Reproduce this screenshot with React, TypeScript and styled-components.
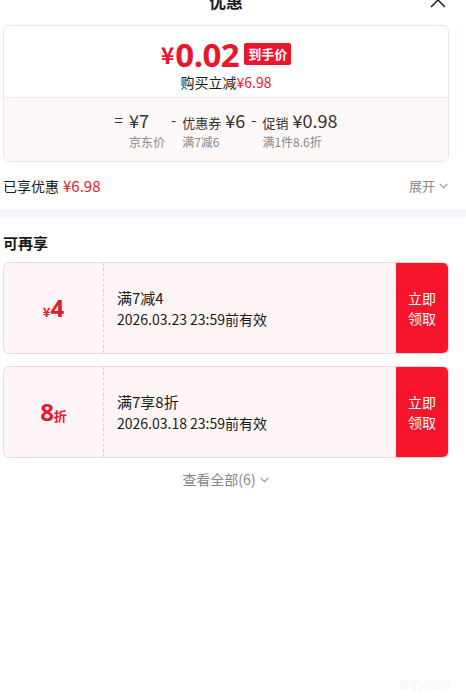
import React from "react";
import styled, { createGlobalStyle } from "styled-components";

const RED = "#e8172c";
const FONT = `"Noto Sans CJK SC", "Noto Sans", sans-serif`;

const GlobalStyle = createGlobalStyle`
  html, body {
    margin: 0;
    padding: 0;
    background: #fff;
    font-family: ${FONT};
    color: #1a1a1a;
  }
`;

const Page = styled.div`
  width: 466px;
  height: 699px;
  overflow: hidden;
  position: relative;
`;

const Header = styled.div`
  display: grid;
  grid-template-columns: 1fr auto 1fr;
  align-items: center;
  height: 40px;
  margin-top: -20px;
  padding: 0 17px 0 3px;
`;

const Title = styled.div`
  grid-column: 2;
  font-size: 17px;
  font-weight: 700;
  color: #1a1a1a;
  line-height: 1;
`;

const Close = styled.div`
  justify-self: end;
  display: flex;
  margin-right: 2px;
`;

const Section = styled.div`
  padding: 0 17px 0 3px;
`;

const SummaryCard = styled.div`
  margin-top: 5px;
  border: 1px solid #f6dfe2;
  border-radius: 6px;
  overflow: hidden;
`;

const SummaryTop = styled.div`
  height: 71px;
  display: flex;
  flex-direction: column;
  align-items: center;
  padding-top: 9px;
  box-sizing: border-box;
`;

const PriceRow = styled.div`
  display: flex;
  align-items: center;
  height: 38px;
  color: ${RED};
  font-weight: 700;
`;

const Yen = styled.span<{ size: number }>`
  font-size: ${(p) => p.size}px;
  font-weight: 700;
  line-height: 1;
  margin-right: 1px;
`;

const BigNum = styled.span`
  font-family: "Noto Sans", sans-serif;
  font-size: 33px;
  line-height: 1;
  letter-spacing: -0.5px;
`;

const Badge = styled.span`
  margin-left: 5px;
  background: ${RED};
  color: #fff;
  font-size: 13px;
  font-weight: 700;
  padding: 0 4px;
  height: 22px;
  line-height: 22px;
  border-radius: 2px;
`;

const SaveLine = styled.div`
  font-size: 14px;
  line-height: 18px;
  color: #1a1a1a;
`;

const Red = styled.span`
  color: ${RED};
`;

const SummaryBottom = styled.div`
  height: 64px;
  background: #fff8f8;
  border-top: 1px solid #fbe9ea;
  display: flex;
  justify-content: center;
  align-items: flex-start;
  padding-top: 11px;
  box-sizing: border-box;
  gap: 6px;
`;

const Op = styled.span`
  font-size: 15px;
  color: #333;
  height: 22px;
  line-height: 22px;
`;

const Term = styled.div`
  display: flex;
  flex-direction: column;
  gap: 2px;
`;

const TermTop = styled.div`
  display: flex;
  align-items: baseline;
  gap: 4px;
  height: 22px;
  line-height: 22px;
  color: #333;
`;

const TermLabel = styled.span`
  font-size: 13px;
  line-height: 22px;
  color: #333;
`;

const TermAmount = styled.span`
  font-size: 18px;
  line-height: 22px;
  color: #333;
`;

const TermSub = styled.span`
  font-size: 12px;
  color: #888;
  line-height: 18px;
`;

const EnjoyRow = styled.div`
  display: flex;
  justify-content: space-between;
  align-items: center;
  height: 47px;
`;

const EnjoyText = styled.div`
  font-size: 14px;
  color: #1a1a1a;
`;

const EnjoyAmount = styled.span`
  color: ${RED};
  font-size: 15px;
  margin-left: 4px;
`;

const Expand = styled.div`
  display: flex;
  align-items: center;
  gap: 3px;
  font-size: 13px;
  color: #888;
`;

const Band = styled.div`
  height: 9px;
  background: #f6f7fb;
`;

const SectionTitle = styled.div`
  font-size: 15px;
  font-weight: 700;
  height: 44px;
  display: flex;
  align-items: center;
  padding-top: 4px;
  box-sizing: border-box;
`;

const CouponList = styled.div`
  display: flex;
  flex-direction: column;
  gap: 12px;
`;

const Coupon = styled.div`
  display: flex;
  height: 92px;
  border: 1px solid #f5d8dc;
  border-radius: 6px;
  background: #fff5f6;
  overflow: hidden;
  box-sizing: border-box;
`;

const CouponValue = styled.div`
  width: 100px;
  flex: none;
  border-right: 1px dashed #e9cdd1;
  display: flex;
  align-items: baseline;
  justify-content: center;
  padding-top: 28px;
  box-sizing: border-box;
  color: ${RED};
  font-weight: 700;
`;

const ValueNum = styled.span`
  font-family: "Noto Sans", sans-serif;
  font-size: 24px;
  font-weight: 700;
`;

const ValueUnit = styled.span`
  font-size: 13px;
  font-weight: 700;
`;

const CouponInfo = styled.div`
  flex: 1;
  display: flex;
  flex-direction: column;
  justify-content: center;
  padding-left: 13px;
  gap: 1px;
`;

const CouponName = styled.div`
  font-size: 15px;
  line-height: 20px;
  color: #1a1a1a;
`;

const CouponDate = styled.div`
  font-size: 14px;
  line-height: 20px;
  color: #1a1a1a;
`;

const ClaimButton = styled.div`
  width: 52px;
  flex: none;
  background: #f7152b;
  color: #fff;
  font-size: 14px;
  line-height: 20px;
  display: flex;
  align-items: center;
  justify-content: center;
  text-align: center;
`;

const ViewAll = styled.div`
  display: flex;
  align-items: center;
  justify-content: center;
  gap: 3px;
  height: 42px;
  font-size: 14px;
  color: #888;
`;

const Watermark = styled.div`
  position: absolute;
  right: 12px;
  bottom: 6px;
  font-size: 11px;
  color: #f5f5f5;
`;

const Chevron: React.FC<{ size?: number }> = ({ size = 10 }) => (
  <svg width={size} height={size} viewBox="0 0 10 10" fill="none">
    <path d="M1.5 3.5 L5 7 L8.5 3.5" stroke="#999" strokeWidth="1.1" />
  </svg>
);

const coupons = [
  { value: "4", prefix: "¥", suffix: "", name: "满7减4", date: "2026.03.23 23:59前有效" },
  { value: "8", prefix: "", suffix: "折", name: "满7享8折", date: "2026.03.18 23:59前有效" },
];

export default function App() {
  return (
    <Page>
      <GlobalStyle />
      <Header>
        <Title>优惠</Title>
        <Close>
          <svg width="18" height="18" viewBox="0 0 18 18" fill="none">
            <path d="M2 2 L16 16 M16 2 L2 16" stroke="#222" strokeWidth="1.5" />
          </svg>
        </Close>
      </Header>

      <Section>
        <SummaryCard>
          <SummaryTop>
            <PriceRow>
              <Yen size={23}>¥</Yen>
              <BigNum>0.02</BigNum>
              <Badge>到手价</Badge>
            </PriceRow>
            <SaveLine>
              购买立减<Red>¥6.98</Red>
            </SaveLine>
          </SummaryTop>
          <SummaryBottom>
            <Op>=</Op>
            <Term>
              <TermTop>
                <TermAmount>¥7</TermAmount>
              </TermTop>
              <TermSub>京东价</TermSub>
            </Term>
            <Op>-</Op>
            <Term>
              <TermTop>
                <TermLabel>优惠券</TermLabel>
                <TermAmount>¥6</TermAmount>
              </TermTop>
              <TermSub>满7减6</TermSub>
            </Term>
            <Op>-</Op>
            <Term>
              <TermTop>
                <TermLabel>促销</TermLabel>
                <TermAmount>¥0.98</TermAmount>
              </TermTop>
              <TermSub>满1件8.6折</TermSub>
            </Term>
          </SummaryBottom>
        </SummaryCard>

        <EnjoyRow>
          <EnjoyText>
            已享优惠<EnjoyAmount>¥6.98</EnjoyAmount>
          </EnjoyText>
          <Expand>
            展开
            <Chevron size={11} />
          </Expand>
        </EnjoyRow>
      </Section>

      <Band />

      <Section>
        <SectionTitle>可再享</SectionTitle>
        <CouponList>
          {coupons.map((c) => (
            <Coupon key={c.name}>
              <CouponValue>
                {c.prefix && <ValueUnit>{c.prefix}</ValueUnit>}
                <ValueNum>{c.value}</ValueNum>
                {c.suffix && <ValueUnit>{c.suffix}</ValueUnit>}
              </CouponValue>
              <CouponInfo>
                <CouponName>{c.name}</CouponName>
                <CouponDate>{c.date}</CouponDate>
              </CouponInfo>
              <ClaimButton>
                立即
                <br />
                领取
              </ClaimButton>
            </Coupon>
          ))}
        </CouponList>
        <ViewAll>
          查看全部(6)
          <Chevron size={11} />
        </ViewAll>
      </Section>

      <Watermark>装机小助手</Watermark>
    </Page>
  );
}
